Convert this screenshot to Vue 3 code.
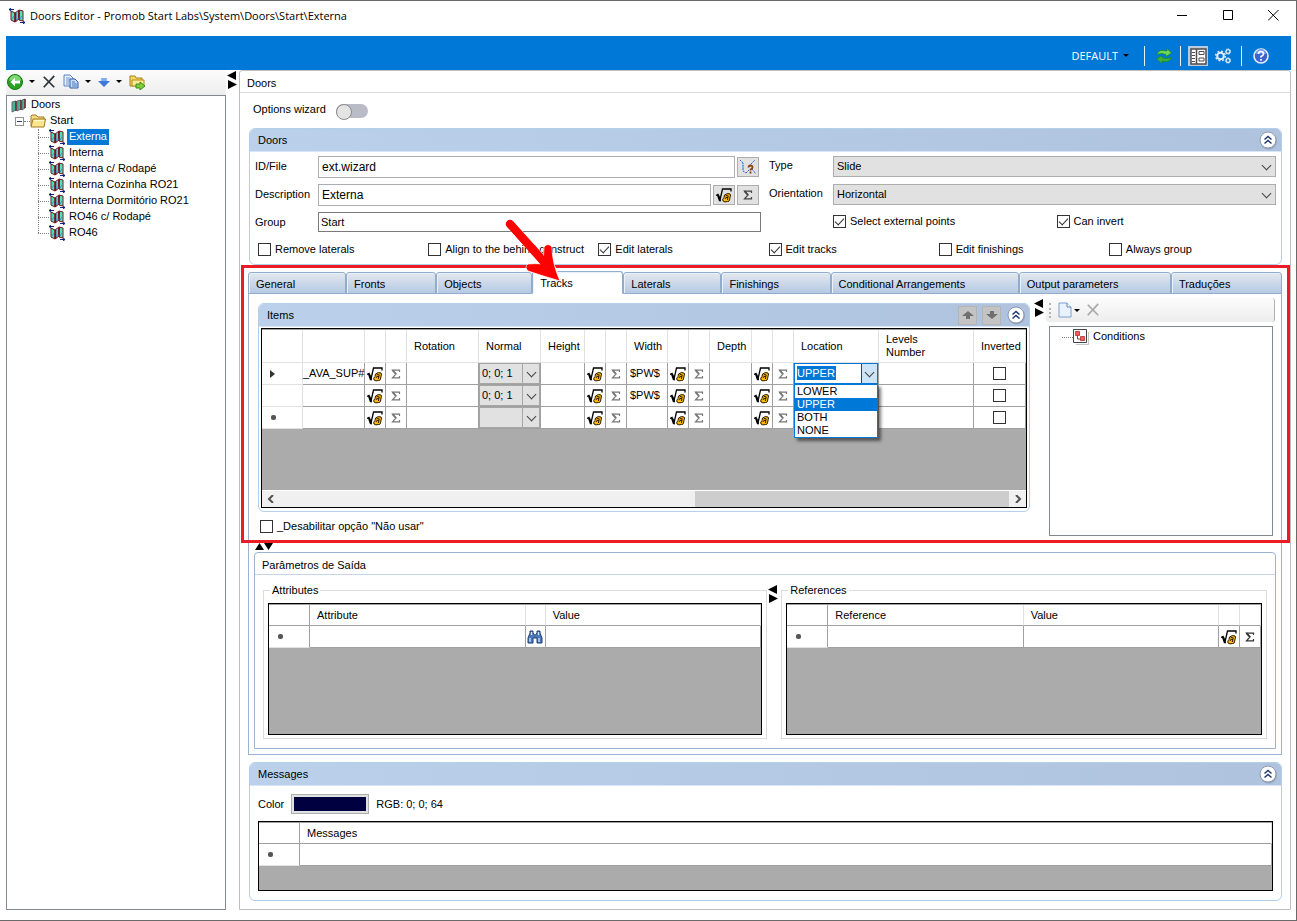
<script setup>
import { ref } from 'vue'

const tree = ['Externa', 'Interna', 'Interna c/ Rodapé', 'Interna Cozinha RO21', 'Interna Dormitório RO21', 'RO46 c/ Rodapé', 'RO46']
const selected = ref('Externa')
const tabs = [
  { name: 'General', size: 98 },
  { name: 'Fronts', size: 90 },
  { name: 'Objects', size: 96 },
  { name: 'Tracks', size: 91 },
  { name: 'Laterals', size: 98 },
  { name: 'Finishings', size: 109 },
  { name: 'Conditional Arrangements', size: 188 },
  { name: 'Output parameters', size: 152 },
  { name: 'Traduções', size: 111 }
]
const tabColumns = tabs.map(t => `minmax(0, ${t.size}fr)`).join(' ')
const activeTab = ref('Tracks')
const flags = [
  { label: 'Remove laterals', on: false },
  { label: 'Align to the behind construct', on: false },
  { label: 'Edit laterals', on: true },
  { label: 'Edit tracks', on: true },
  { label: 'Edit finishings', on: false },
  { label: 'Always group', on: false }
]
const rows = [
  { mark: 'current', name: '_AVA_SUP#', normal: '0; 0; 1', width: '$PW$', open: true },
  { mark: '', name: '', normal: '0; 0; 1', width: '$PW$', open: false },
  { mark: 'new', name: '', normal: '', width: '', open: false }
]
const places = ['LOWER', 'UPPER', 'BOTH', 'NONE']
const place = ref('UPPER')
</script>

<template>
  <div class="window">
    <svg class="defs" width="0" height="0" aria-hidden="true">
      <symbol id="door" viewBox="0 0 16 16">
        <path d="M2 3l4 2v9l-4-2z" fill="#4fe3b8" stroke="#5c1a22" />
        <path d="M6 5l4-3v9l-4 3z" fill="#58cfd8" stroke="#7a1420" />
        <path d="M10 2l4 1v10l-4-1z" fill="#4fe3b8" stroke="#7a1420" />
        <path d="M6.500 5v9M10 2v10" stroke="#7a1420" stroke-width="1.600" />
        <path d="M7.500 12l2-2M11 11l2-3M3 11l2-3" stroke="#3d8fe0" />
        <path d="M0 1.500h5M2 0L0 1.500 2 3M11 14.500h5M14 13l2 1.500-2 1.500" fill="none" stroke="#0b1f8a" />
      </symbol>
      <symbol id="doors" viewBox="0 0 16 16">
        <path d="M1 5l4-1v9l-4 2zM6 4l4-1v9l-4 2zM11 3l3-1v9l-3 2z" fill="#45b39b" stroke="#6a6a6a" />
        <path d="M5 4v10M10 3v10M14 2v9" stroke="#6d1d2a" stroke-width="1.400" />
      </symbol>
      <symbol id="folder" viewBox="0 0 16 16">
        <path d="M1 13V3l1-1h4l2 2h6v3" fill="#f3dc84" stroke="#a27a1e" />
        <path d="M1 14L3 6h12.500L14 14z" fill="#fbe58e" stroke="#a27a1e" />
        <path d="M4 7.500h10" stroke="#fffbd8" />
      </symbol>
      <symbol id="back" viewBox="0 0 16 16">
        <circle cx="8" cy="8" r="7.500" fill="#2aa124" stroke="#167a12" />
        <path d="M2 7a6 6 0 0 1 12 0q-6-2-12 0z" fill="#7ed670" />
        <path d="M8 3.500L3.500 8 8 12.500V9.500h5v-3H8z" fill="#fff" />
      </symbol>
      <symbol id="cross" viewBox="0 0 16 16">
        <path d="M2 2l12 12M14 1L2 14" stroke="currentColor" stroke-width="2" fill="none" />
      </symbol>
      <symbol id="copy" viewBox="0 0 16 16">
        <path d="M1 1h6l3 3v8H1z" fill="#e8f0fc" stroke="#5a82c0" />
        <path d="M3 4h4M3 6h4M3 8h3M3 10h3" stroke="#6f96d0" />
        <path d="M7 5h5l3 3v6H7z" fill="#c9dcf7" stroke="#2f5aa6" />
        <path d="M9 8h3M9 10h5M9 12h5" stroke="#4a79c4" />
      </symbol>
      <symbol id="down" viewBox="0 0 12 12">
        <path d="M3.500 2h5v3H12l-6 6-6-6h3.500z" fill="#3f78dd" />
        <path d="M4 2h4v3H4z" fill="#82adf2" />
      </symbol>
      <symbol id="export" viewBox="0 0 16 16">
        <path d="M1 12V2h5l1 2h6v8z" fill="#f7d862" stroke="#a87f15" />
        <path d="M3 12V6h12v6z" fill="#fdeb93" stroke="#b48b1d" />
        <path d="M7 10h4V8l5 4-5 4v-2H7z" fill="#7bd13b" stroke="#3d8a16" />
      </symbol>
      <symbol id="refresh" viewBox="0 0 16 16">
        <path d="M1 7Q2 2 7 2.500l4 .5V.5L15.500 5 10 8.500V6.500L6 5.500Q3.500 5 1 7z" fill="#6fd657" stroke="#1d8b1d" stroke-width=".7" />
        <path d="M15.500 9Q14 14 9.500 13.500L6 13v2.500L.5 11 6 7.500v2l3.500 1q3 .5 6-1.500z" fill="#3fae35" stroke="#1d8b1d" stroke-width=".7" />
      </symbol>
      <symbol id="layout" viewBox="0 0 20 20">
        <path d="M0 0h20v20H0z" fill="#b9cbdc" />
        <path d="M3 3h15v15H3z" fill="#fff" stroke="#4d4d4d" stroke-width="1.500" />
        <path d="M8.500 3v15" stroke="#4d4d4d" stroke-width="1.500" />
        <path d="M4 6.500h3M4 9.500h3M4 12.500h3M4 15.500h3" stroke="#4d4d4d" />
        <path d="M11 5.500h5v3h-5zM11 12h5v3h-5z" fill="none" stroke="#4d4d4d" />
      </symbol>
      <symbol id="gears" viewBox="0 0 16 16">
        <circle cx="5.500" cy="8" r="3.300" fill="none" stroke="#e3edf7" stroke-width="2" />
        <circle cx="5.500" cy="8" r="4.800" fill="none" stroke="#e3edf7" stroke-width="1.500" stroke-dasharray="1.900 1.870" />
        <circle cx="13" cy="3.500" r="1.900" fill="none" stroke="#e3edf7" stroke-width="1.200" />
        <circle cx="13" cy="3.500" r="2.700" fill="none" stroke="#e3edf7" stroke-dasharray="1.200 1.200" />
        <circle cx="13" cy="12.500" r="1.900" fill="none" stroke="#e3edf7" stroke-width="1.200" />
        <circle cx="13" cy="12.500" r="2.700" fill="none" stroke="#e3edf7" stroke-dasharray="1.200 1.200" />
      </symbol>
      <symbol id="help" viewBox="0 0 16 16">
        <circle cx="8" cy="8" r="7" fill="#3d63cf" stroke="#e9eefb" stroke-width="1.600" />
        <path d="M3 6a5 5 0 0 1 10 0q-5-1-10 0z" fill="#7b9be8" />
        <path d="M5.500 6q0-2.500 2.500-2.500T10.500 6Q10.500 7.500 8 8.500v1M8 11v1.800" fill="none" stroke="#fff" stroke-width="1.700" />
      </symbol>
      <symbol id="fold" viewBox="0 0 20 20">
        <circle cx="10.500" cy="11" r="8.500" fill="#7f8fae" opacity=".6" />
        <circle cx="10" cy="10" r="8" fill="#fff" stroke="#8e99ae" />
        <path d="M6.500 9.500L10 6.500l3.500 3M6.500 13.500l3.500-3 3.500 3" fill="none" stroke="#20386e" stroke-width="1.500" />
      </symbol>
      <symbol id="formula" viewBox="0 0 16 16">
        <path d="M8.500 8q3-2.500 5.500-1l.5 1-1 5q-.5 2-2 1.500-3 1-4.500-.5-1-2 1-3.500z" fill="#ffb900" stroke="#2a1c00" />
        <path d="M9.500 9q2-1.500 3 0M9 12q0-2 3-1.500M12 9l-.5 4" fill="none" stroke="#2a1c00" />
        <path d="M0 8.500l2-1L4 13 6.500 2H15v2.500" fill="none" stroke="#000" stroke-width="1.300" />
        <path d="M2 8l2 6" stroke="#000" stroke-width="2.200" />
      </symbol>
      <symbol id="sigma" viewBox="0 0 10 10">
        <path d="M8.500 3V1.200H1.500L5 5 1.500 8.800h7V7" fill="none" stroke="currentColor" stroke-width="1.200" />
        <path d="M1.500 1.200L5 5" stroke="currentColor" stroke-width="1.800" />
      </symbol>
      <symbol id="curve" viewBox="0 0 18 16">
        <path d="M1 1l3 3v8l3 2M10 7l4-4 2-2M7 14l3-3M13 10l4 5" fill="none" stroke="#2f5fe0" stroke-dasharray="2 1" />
        <path d="M4 4v8" stroke="#19b5c4" stroke-dasharray="1 1" />
        <path d="M9.500 8.500q0-2 2-2t2 2q0 1-2 2v1M11.500 12.500v2" fill="none" stroke="#8a4412" stroke-width="1.800" />
      </symbol>
      <symbol id="binoculars" viewBox="0 0 16 16">
        <path d="M3 4V2h3v2l1.500 2h1L10 4V2h3v2l2 5v5h-5V9H6v5H1V9z" fill="#4d78b8" stroke="#1f3f77" />
        <path d="M3 9v4M12 9v4M4.500 3v3M11.500 3v3" stroke="#d5e6fa" stroke-width="1.300" />
      </symbol>
      <symbol id="page" viewBox="0 0 16 16">
        <path d="M2 1h8l4 4v10H2z" fill="#eaf3fd" stroke="#7da0cf" />
        <path d="M10 1v4h4" fill="#fff" stroke="#5c86c2" />
      </symbol>
      <symbol id="condition" viewBox="0 0 16 16">
        <path d="M3 15.500h12.500V3" fill="none" stroke="#c4c4c4" />
        <path d="M.5.500h13v13H.5z" fill="#fff" stroke="#444" />
        <path d="M4.500 6v4h4" fill="none" stroke="#555" />
        <path d="M2.500 2.500h4v4h-4zM7.500 7.500h4v4h-4z" fill="#ff5a55" stroke="#a33" stroke-width=".8" />
      </symbol>
      <symbol id="arrow-up" viewBox="0 0 12 8">
        <path d="M6 0l6 5H8v3H4V5H0z" fill="#707070" />
      </symbol>
      <symbol id="arrow-down" viewBox="0 0 12 8">
        <path d="M6 8L0 3h4V0h4v3h4z" fill="#707070" />
      </symbol>
    </svg>

    <header class="titlebar">
      <svg class="i16"><use href="#door" /></svg>
      <h1>Doors Editor - Promob Start Labs\System\Doors\Start\Externa</h1>
      <div class="winctl">
        <button aria-label="Minimize"><svg width="11" height="11"><path d="M0 5.500h10" stroke="#000" /></svg></button>
        <button aria-label="Maximize"><svg width="11" height="11"><path d="M.5.5h9v9h-9z" fill="none" stroke="#000" /></svg></button>
        <button aria-label="Close"><svg width="11" height="11"><path d="M0 0l10.500 10.500M10.500 0L0 10.500" stroke="#000" /></svg></button>
      </div>
    </header>

    <div class="ribbon">
      <button class="profile">DEFAULT<i class="caret"></i></button>
      <i class="rule"></i>
      <button aria-label="Refresh"><svg class="i16"><use href="#refresh" /></svg></button>
      <i class="rule"></i>
      <button aria-label="Layout" class="tight"><svg class="i20"><use href="#layout" /></svg></button>
      <button aria-label="Settings"><svg class="i16"><use href="#gears" /></svg></button>
      <i class="rule"></i>
      <button aria-label="Help"><svg class="i16"><use href="#help" /></svg></button>
    </div>

    <div class="work">
      <aside>
        <div class="tools">
          <button aria-label="Back"><svg class="i16"><use href="#back" /></svg><i class="caret"></i></button>
          <button aria-label="Delete" class="dark"><svg class="i14"><use href="#cross" /></svg></button>
          <button aria-label="Copy"><svg class="i16"><use href="#copy" /></svg><i class="caret"></i></button>
          <button aria-label="Move down"><svg class="i12"><use href="#down" /></svg><i class="caret"></i></button>
          <button aria-label="Export"><svg class="i16"><use href="#export" /></svg></button>
        </div>
        <nav class="tree" aria-label="Doors tree">
          <div class="node root"><svg class="i16"><use href="#doors" /></svg><span>Doors</span></div>
          <div class="node branch"><button class="toggle-node" aria-label="Collapse Start"></button><i class="dots"></i><svg class="i16"><use href="#folder" /></svg><span>Start</span></div>
          <ul>
            <li v-for="t in tree" :key="t" class="node" :class="{ on: t === selected }" @click="selected = t">
              <i class="dots"></i><svg class="i16"><use href="#door" /></svg><span>{{ t }}</span>
            </li>
          </ul>
        </nav>
      </aside>

      <div class="split"><svg width="10" height="18"><path d="M9 0v9L0 4.500zM1 9v9l9-4.500z" /></svg></div>

      <main>
        <h2>Doors</h2>
        <div class="content">
          <label class="wizard">Options wizard<input type="checkbox" role="switch" /></label>

          <section class="panel">
            <header><h3>Doors</h3><button aria-label="Collapse Doors"><svg class="i20"><use href="#fold" /></svg></button></header>
            <div class="form">
              <label for="idfile">ID/File</label>
              <div class="combo"><input id="idfile" value="ext.wizard" class="big" /><button aria-label="Browse"><svg width="18" height="16"><use href="#curve" /></svg></button></div>
              <label for="type">Type</label>
              <div class="sel"><select id="type"><option>Slide</option></select></div>
              <label for="desc">Description</label>
              <div class="combo"><input id="desc" value="Externa" class="big" /><button aria-label="Formula"><svg class="i16"><use href="#formula" /></svg></button><button aria-label="Sum"><svg class="i10"><use href="#sigma" /></svg></button></div>
              <label for="orient">Orientation</label>
              <div class="sel"><select id="orient"><option>Horizontal</option></select></div>
              <label for="group">Group</label>
              <input id="group" value="Start" />
              <div class="pair">
                <label class="check"><input type="checkbox" checked />Select external points</label>
                <label class="check"><input type="checkbox" checked />Can invert</label>
              </div>
            </div>
            <div class="flags">
              <label v-for="f in flags" :key="f.label" class="check"><input type="checkbox" :checked="f.on" />{{ f.label }}</label>
            </div>
          </section>

          <div class="tabs" role="tablist" :style="{ gridTemplateColumns: tabColumns }">
            <button v-for="t in tabs" :key="t.name" role="tab" :aria-selected="t.name === activeTab" :class="{ on: t.name === activeTab }" @click="activeTab = t.name">{{ t.name }}</button>
          </div>

          <div class="tabbody">
            <div class="upper">
              <div class="left">
                <section class="panel items">
                  <header>
                    <h3>Items</h3>
                    <button class="move" aria-label="Move up"><svg width="12" height="8"><use href="#arrow-up" /></svg></button>
                    <button class="move" aria-label="Move down"><svg width="12" height="8"><use href="#arrow-down" /></svg></button>
                    <button aria-label="Collapse Items"><svg class="i20"><use href="#fold" /></svg></button>
                  </header>
                  <div class="grid">
                    <table class="tall">
                      <colgroup>
                        <col class="w41" /><col class="w62" /><col class="w21" /><col class="w21" /><col class="w72" /><col class="w62" /><col class="w44" /><col class="w21" /><col class="w21" /><col class="w41" /><col class="w21" /><col class="w21" /><col class="w42" /><col class="w21" /><col class="w21" /><col class="w85" /><col /><col class="w52" />
                      </colgroup>
                      <thead>
                        <tr>
                          <th></th><th></th><th></th><th></th><th>Rotation</th><th>Normal</th><th>Height</th><th></th><th></th><th>Width</th><th></th><th></th><th>Depth</th><th></th><th></th><th>Location</th><th>Levels<br />Number</th><th>Inverted</th>
                        </tr>
                      </thead>
                      <tbody>
                        <tr v-for="(r, n) in rows" :key="n">
                          <td class="mark"><i :class="r.mark"></i></td>
                          <td class="name">{{ r.name }}</td>
                          <td class="ic"><svg class="i16"><use href="#formula" /></svg></td>
                          <td class="ic soft"><svg class="i10"><use href="#sigma" /></svg></td>
                          <td></td>
                          <td class="fill"><div class="sel"><select aria-label="Normal"><option>{{ r.normal }}</option></select></div></td>
                          <td></td>
                          <td class="ic"><svg class="i16"><use href="#formula" /></svg></td>
                          <td class="ic soft"><svg class="i10"><use href="#sigma" /></svg></td>
                          <td class="val">{{ r.width }}</td>
                          <td class="ic"><svg class="i16"><use href="#formula" /></svg></td>
                          <td class="ic soft"><svg class="i10"><use href="#sigma" /></svg></td>
                          <td></td>
                          <td class="ic"><svg class="i16"><use href="#formula" /></svg></td>
                          <td class="ic soft"><svg class="i10"><use href="#sigma" /></svg></td>
                          <td class="fill">
                            <div v-if="r.open" class="sel drop">
                              <select v-model="place" aria-label="Location"><option v-for="p in places" :key="p">{{ p }}</option></select>
                              <ul role="listbox" aria-label="Location options">
                                <li v-for="p in places" :key="p" role="option" :aria-selected="p === place" :class="{ on: p === place }" @click="place = p">{{ p }}</li>
                              </ul>
                            </div>
                          </td>
                          <td></td>
                          <td class="ic"><input type="checkbox" aria-label="Inverted" /></td>
                        </tr>
                      </tbody>
                    </table>
                    <div class="scroll">
                      <button aria-label="Scroll left"><svg width="8" height="8"><path d="M6 0L2 4l4 4" fill="none" stroke="#505050" stroke-width="2" /></svg></button>
                      <div class="track"><i></i></div>
                      <button aria-label="Scroll right"><svg width="8" height="8"><path d="M2 0l4 4-4 4" fill="none" stroke="#505050" stroke-width="2" /></svg></button>
                    </div>
                  </div>
                </section>
                <label class="check disable"><input type="checkbox" />_Desabilitar opção "Não usar"</label>
              </div>
              <div class="split inner"><svg width="10" height="18"><path d="M9 0v9L0 4.500zM1 9v9l9-4.500z" /></svg></div>
              <div class="conds">
                <div class="tools slim">
                  <i class="grip"></i>
                  <button aria-label="New condition"><svg class="i16"><use href="#page" /></svg><i class="caret"></i></button>
                  <button aria-label="Delete condition" class="faded"><svg class="i14"><use href="#cross" /></svg></button>
                </div>
                <div class="condbox"><div class="node"><i class="dots"></i><svg class="i16"><use href="#condition" /></svg><span>Conditions</span></div></div>
              </div>
              <div class="highlight"></div>
              <svg class="pointer" width="64" height="66" viewBox="0 0 64 66">
                <path d="M8 8L51 55" stroke="#fff" stroke-width="9" stroke-linecap="round" />
                <path d="M8 8L49 53" stroke="#f00" stroke-width="8" stroke-linecap="round" />
                <path d="M26 48q12-1 18 1-4-8-2-18 4-5 8 0 0 16 8 34-17-5-32-10-4-4 0-7z" fill="#f00" stroke="#fff" stroke-width=".7" />
                <path d="M8 8L48 53" stroke="#f00" stroke-width="8" stroke-linecap="round" />
              </svg>
            </div>

            <div class="hsplit"><svg width="20" height="8"><path d="M0 7h9L4.500 0zM9 0h9l-4.500 7z" /></svg></div>

            <section class="params">
              <h4>Parâmetros de Saída</h4>
              <div class="cols">
                <fieldset>
                  <legend>Attributes</legend>
                  <div class="grid low">
                    <table>
                      <colgroup><col class="w41" /><col /><col class="w20" /><col /></colgroup>
                      <thead><tr><th></th><th>Attribute</th><th></th><th>Value</th></tr></thead>
                      <tbody><tr><td class="mark"><i class="new"></i></td><td></td><td class="ic"><svg class="i16"><use href="#binoculars" /></svg></td><td></td></tr></tbody>
                    </table>
                  </div>
                </fieldset>
                <div class="split mid"><svg width="10" height="18"><path d="M9 0v9L0 4.500zM1 9v9l9-4.500z" /></svg></div>
                <fieldset>
                  <legend>References</legend>
                  <div class="grid low">
                    <table>
                      <colgroup><col class="w41" /><col /><col /><col class="w21" /><col class="w21" /></colgroup>
                      <thead><tr><th></th><th>Reference</th><th>Value</th><th></th><th></th></tr></thead>
                      <tbody><tr><td class="mark"><i class="new"></i></td><td></td><td></td><td class="ic"><svg class="i16"><use href="#formula" /></svg></td><td class="ic"><svg class="i10"><use href="#sigma" /></svg></td></tr></tbody>
                    </table>
                  </div>
                </fieldset>
              </div>
            </section>
          </div>

          <section class="panel msgs">
            <header><h3>Messages</h3><button aria-label="Collapse Messages"><svg class="i20"><use href="#fold" /></svg></button></header>
            <div class="color"><span id="color-label">Color</span><button class="swatch" aria-labelledby="color-label"></button><span>RGB: 0; 0; 64</span></div>
            <div class="grid">
              <table>
                <colgroup><col class="w41" /><col /></colgroup>
                <thead><tr><th></th><th>Messages</th></tr></thead>
                <tbody><tr><td class="mark"><i class="new"></i></td><td></td></tr></tbody>
              </table>
            </div>
          </section>
        </div>
      </main>
    </div>
  </div>
</template>

<style>
body { background: #fff; }
</style>

<style scoped>
* { box-sizing: border-box; }
.window { display: flex; flex-direction: column; min-height: 100vh; padding: 0 5px 10px 6px; border: solid #6a6a6a; border-width: 1px 1px 1px 0; background: #fff; color: #000; font: 11px/13px "Liberation Sans", Arial, sans-serif; }
.defs { position: absolute; }
button, input, select { font: inherit; color: inherit; border-radius: 0; margin: 0; }
button { border: 0; background: none; padding: 0; display: flex; align-items: center; justify-content: center; }
h1, h2, h3, h4, ul { margin: 0; padding: 0; font-weight: 400; font-size: 11px; list-style: none; }
svg { display: block; flex: none; }
.i10 { width: 10px; height: 10px; }
.i12 { width: 12px; height: 12px; }
.i14 { width: 14px; height: 14px; }
.i16 { width: 16px; height: 16px; }
.i20 { width: 20px; height: 20px; }
.caret { border: 3px solid transparent; border-top-color: #000; border-bottom: 0; width: 0; height: 0; }

.titlebar { display: flex; align-items: center; height: 35px; padding: 0 0 6px 3px; }
.titlebar h1 { margin-left: 5px; font: 11px/16px "Open Sans", "Noto Sans", sans-serif; flex: 1; }
.winctl { display: flex; }
.winctl button { width: 46px; height: 24px; }
.winctl button:last-child { width: 45px; margin-right: -5px; }

.ribbon { display: flex; align-items: center; justify-content: flex-end; height: 34px; padding: 5px 22px 0 0; background: #0078d7; color: #fff; }
.ribbon button { margin: 1px 0 0 11px; }
.ribbon .profile { font: 11px/16px "Open Sans", "Noto Sans", sans-serif; margin: 0 15px 0 0; gap: 5px; }
.ribbon .tight { margin-left: 7px; margin-right: -4px; }
.ribbon .rule { width: 1px; height: 20px; background: #e8f2fb; }
.ribbon .rule:nth-of-type(2) { margin-left: 8px; }
.ribbon .rule:nth-of-type(3) { margin-left: 10px; }

.work { display: flex; flex: 1; }
aside { display: flex; flex-direction: column; width: 220px; flex: none; }
.tools { display: flex; align-items: center; height: 25px; padding: 0 2px 2px 1px; background: linear-gradient(#fcfcfc, #ededee); gap: 7px; }
.tools button { gap: 6px; }
.tools .dark { color: #30343c; }
.tree { flex: 1; border: 1px solid #828790; padding-top: 1px; }
.node { display: flex; align-items: center; height: 16px; }
.root { padding-left: 4px; gap: 2px; }
.node span { padding: 0 2px 2px; line-height: 14px; white-space: nowrap; }
.branch { padding-left: 8px; }
.branch .dots { width: 6px; }
.branch span { margin-left: 3px; padding-left: 1px; }
.toggle-node { width: 9px; height: 9px; border: 1px solid #919191; }
.toggle-node::before { content: ""; width: 5px; height: 1px; background: #2b3f7c; }
.tree ul { margin-left: 31px; position: relative; }
.tree ul::before { content: ""; position: absolute; top: 0; bottom: 8px; border-left: 1px dotted #808080; }
.dots { width: 11px; border-top: 1px dotted #808080; flex: none; }
.tree li span { margin-left: 2px; }
.tree li.on span { background: #0078d7; color: #fff; }

.split { width: 13px; flex: none; padding: 1px 0 0 1px; }
main { flex: 1; min-width: 0; border: 1px solid #bfbfbf; border-radius: 3px 3px 0 0; }
h2 { line-height: 13px; padding: 6px 7px 2px; border-bottom: 1px solid #dcdcdc; }
.content { padding: 8px 8px 0 9px; }
.wizard { display: flex; gap: 10px; height: 27px; padding: 2px 0 0 4px; line-height: 13px; }
.wizard input { appearance: none; width: 32px; height: 14px; margin-top: 1px; border-radius: 7px; background: #b9bcc6; }
.wizard input::before { content: ""; display: block; width: 14px; height: 14px; border: 1px solid #8b8b8b; border-radius: 50%; background: #e4e4e4; }

.panel { border: 1px solid #b4cfea; border-radius: 6px; }
.panel > header { display: flex; align-items: center; height: 23px; padding: 0 3px 0 8px; gap: 3px; border-bottom: 1px solid #d7e5f6; border-radius: 5px 5px 0 0; background: linear-gradient(90deg, #bad0eb, #afc3de); }
.panel h3 { flex: 1; }
.form { display: grid; grid-template-columns: 63px 1fr 72px 1fr; grid-template-rows: 22px 22px 20px; row-gap: 6px; padding: 4px 5px 0; }
.form > label { padding-top: 4px; }
.form > label[for="type"], .form > label[for="orient"] { padding: 3px 0 0 8px; }
.combo { display: flex; gap: 2px; padding-right: 2px; }
.form input:not([type]) { border: 1px solid #abadb3; padding: 0 3px; width: 100%; min-width: 0; background: #fff; }
.form input.big { font-size: 12px; }
.form input#group { border-color: #7a7a7a; padding: 0 2px; }
.combo button { width: 22px; height: 20px; margin-top: 1px; flex: none; border: 1px solid #adadad; background: #e1e1e1; color: #444; }
.sel { position: relative; height: 21px; }
.sel::after { content: ""; position: absolute; right: 6px; top: 6px; width: 6px; height: 6px; border: solid #444; border-width: 0 1px 1px 0; transform: rotate(45deg); pointer-events: none; }
select { display: block; appearance: none; width: 100%; height: 21px; border: 1px solid #adadad; padding: 0 3px; background: #e1e1e1; }
.pair { grid-column: 4; display: grid; grid-template-columns: 1fr 1fr; gap: 4px; }
.check { display: flex; align-items: center; gap: 4px; white-space: nowrap; }
.check input, td input { appearance: none; width: 13px; height: 13px; border: 1px solid #333; background: #fff; flex: none; }
.check input:checked::before { content: ""; display: block; width: 8px; height: 4px; margin: 2px 0 0 1px; border: solid #333; border-width: 0 0 1px 1px; transform: rotate(-47deg); }
.pair .check { height: 18px; }
.flags { display: grid; grid-template-columns: repeat(6, 1fr); padding: 10px 2px 7px 8px; }
.flags .check { height: 15px; }

.tabs { display: grid; margin: 6px 0 0 -1px; height: 23px; align-items: end; }
.tabs button { height: 22px; justify-content: flex-start; padding: 2px 0 0 7px; border: 1px solid #92acce; border-radius: 3px 3px 0 0; background: linear-gradient(#e3e8ef, #b5c9e3); white-space: nowrap; box-shadow: inset 1px 1px #ecf1f7; }
.tabs button.on { position: relative; z-index: 1; height: 23px; border-bottom-color: #fff; background: #fff; }
.tabbody { margin: -1px 0 0 -1px; border: 1px solid #9bb2d3; padding: 0 5px 5px; }
.upper { position: relative; display: flex; height: 247px; padding: 9px 0 0 4px; }
.left { flex: 1; min-width: 0; }
.grid { background: #ababab; border: 1px solid #000; display: flex; flex-direction: column; }
.items .grid { margin: 1px 2px 3px; height: 180px; }
.items > header { gap: 5px; }
.move { width: 19px; height: 19px; border: 1px solid #b4b4b4; background: #c4c4c4; }
table { table-layout: fixed; width: 100%; border-collapse: separate; border-spacing: 0; border-top: 1px solid #a0a0a0; }
th { height: 21px; padding: 0 7px; font-weight: 400; text-align: left; background: #fff; border: solid #a0a0a0; border-width: 0 0 1px; border-right: 1px solid #e2e2e2; }
th:first-child { border-right-color: #a0a0a0; }
.tall th { height: 33px; border-bottom-color: #e2e2e2; }
.tall th:first-child { border-right-color: #e2e2e2; }
td { height: 22px; padding: 0; background: #fff; border: solid #a0a0a0; border-width: 0 1px 1px 0; }
td:first-child { border-bottom-color: #e2e2e2; }
.tall td:first-child { border-right-color: #e2e2e2; }
.mark i { display: block; margin-left: 8px; width: 0; height: 0; }
.mark .current { border: 4px solid transparent; border-left: 5px solid #333; border-right: 0; }
.mark .new { width: 5px; height: 5px; border-radius: 2px; background: #555; margin-left: 9px; }
.name { text-align: right; white-space: nowrap; }
.ic svg, .ic input { margin: 0 auto; display: block; }
.ic { color: #333; }
.soft { color: #777; }
.val { padding-left: 3px; }
.fill select { border: 1px solid #a6a6a6; padding: 0 2px; background: linear-gradient(#a6a6a6, #a6a6a6) right 16px top / 1px 100% no-repeat, #e1e1e1; }
.tall .sel::after { right: 5px; }
.w20 { width: 20px; }
.w21 { width: 21px; }
.w41 { width: 41px; }
.w42 { width: 42px; }
.w44 { width: 44px; }
.w52 { width: 52px; }
.w62 { width: 62px; }
.w72 { width: 72px; }
.w85 { width: 85px; }
.drop select { border-color: #0078d7; color: #fff; padding: 0 2px 1px; background: linear-gradient(#005499, #005499) right 15px top / 1px 100% no-repeat, linear-gradient(#cce4f7, #cce4f7) right / 15px 100% no-repeat, linear-gradient(#0078d7, #0078d7) 2px 2px / 39px 14px no-repeat, #fff; }
.drop option { color: #000; }
.drop ul { position: absolute; z-index: 3; top: 21px; left: 0; width: 100%; border: 1px solid #0078d7; background: #fff; box-shadow: 3px 3px 3px rgba(0, 0, 0, .5); }
.drop li { padding: 0 2px; line-height: 13px; }
.drop li.on { background: #0078d7; color: #fff; }
.scroll { display: flex; height: 17px; margin-top: auto; background: #f0f0f0; border-top: 1px solid #fff; }
.scroll button { width: 17px; }
.scroll .track { flex: 1; display: flex; justify-content: flex-end; }
.scroll .track i { width: 43%; background: #cdcdcd; }
.disable { padding: 8px 0 0 2px; }
.inner { width: 16px; margin-top: -5px; padding-left: 4px; }
.conds { display: flex; flex-direction: column; width: 230px; margin: -5px 0 0; padding-bottom: 5px; }
.slim { height: 24px; margin-right: 1px; padding-bottom: 0; border-right: 1px solid #b0b0b0; border-radius: 3px; padding-left: 3px; gap: 6px; }
.grip { height: 15px; border-left: 2px dotted #b5b5b5; }
.slim .caret { margin-left: -5px; }
.faded { color: #a8a8a8; }
.condbox { flex: 1; margin: 4px 3px 0; border: 1px solid #828790; padding: 2px 0 0 12px; }
.condbox span { margin-left: 2px; }
.highlight { position: absolute; inset: -29px -14px -2px -13px; border: 3px solid #ed1c24; pointer-events: none; z-index: 2; }
.pointer { position: absolute; left: 248px; top: -78px; z-index: 4; pointer-events: none; }
.hsplit { height: 11px; padding: 2px 0 0 1px; }
.params { border: 1px solid #9bb2d3; border-radius: 4px 4px 0 0; }
h4 { padding: 6px 7px 2px; line-height: 13px; border-bottom: 1px solid #c3d5e6; }
.cols { display: flex; padding: 9px 8px; }
fieldset { flex: 504 1 0; min-width: 0; margin: 0; padding: 6px 4px 3px; border: 1px solid #dcdcdc; }
.cols fieldset:last-child { flex-grow: 485; }
legend { margin-left: 2px; padding: 0 2px; line-height: 13px; }
.low { height: 132px; }
.mid { width: 14px; }

.msgs { margin-top: 7px; }
.color { display: flex; align-items: center; gap: 7px; padding: 8px 8px 7px; }
.swatch { width: 78px; height: 20px; border: 1px solid #adadad; background: #000040; box-shadow: inset 0 0 0 2px #e1e1e1; }
.msgs .grid { height: 70px; margin: 0 8px 9px; }
</style>
